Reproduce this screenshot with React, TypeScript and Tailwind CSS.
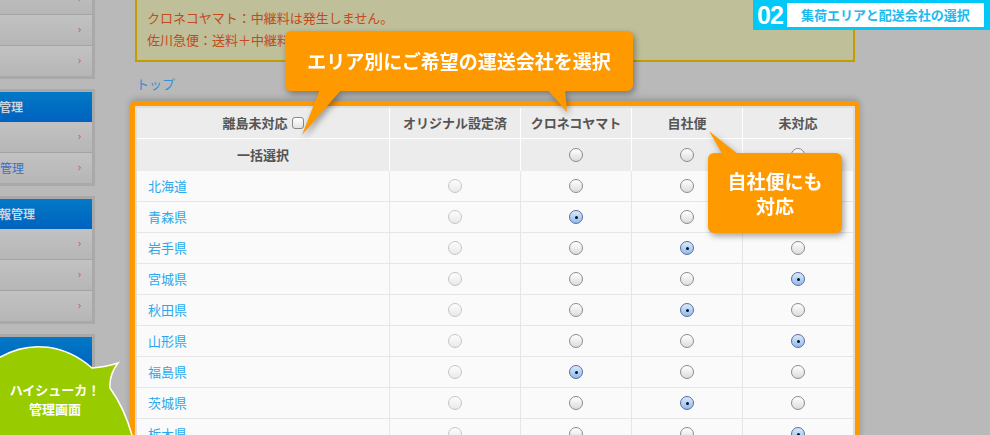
import React from 'react';

type RadioState = 'off' | 'on' | 'dis' | 'none';

const JP = { fontFamily: '"Noto Sans CJK JP", "Noto Sans", sans-serif' };

const Arrow: React.FC = () => (
    <svg width="3" height="5" viewBox="0 0 3 5" className="absolute right-[11px] top-1/2 -translate-y-1/2">
        <path d="M0.4 0.4 L2.5 2.5 L0.4 4.6" fill="none" stroke="#c8504a" strokeWidth="1" />
    </svg>
);

interface SideBoxProps {
    title?: string;
    rows: string[];
    className?: string;
}

const SideBox: React.FC<SideBoxProps> = ({ title, rows, className = '' }) => (
    <div className={`border-[3px] border-l-0 border-[#a9a9a9] ${className}`}>
        {title !== undefined && (
            <div className="h-[30px] flex items-center bg-gradient-to-b from-[#0379c6] to-[#0062bf] text-[12px] font-bold text-[#cbd3df] -indent-[1px]">
                {title}
            </div>
        )}
        {rows.map((r, i) => (
            <div
                key={i}
                className={`relative h-[30px] flex items-center bg-gradient-to-b from-[#c2c2c2] to-[#b6b6b6] text-[12px] text-[#3a6fc4] ${i > 0 ? 'border-t border-[#a3a3a3] h-[31px]' : ''}`}
            >
                {r}
                <Arrow />
            </div>
        ))}
    </div>
);

const Radio: React.FC<{ state: RadioState }> = ({ state }) => {
    if (state === 'none') return null;
    if (state === 'on') {
        return (
            <div className="w-[14px] h-[14px] rounded-full border border-[#5b6c99] bg-gradient-to-b from-[#dbe9fb] to-[#8fbcf0] flex items-center justify-center">
                <div className="w-[3px] h-[3px] rounded-full bg-[#111]" />
            </div>
        );
    }
    if (state === 'dis') {
        return <div className="w-[14px] h-[14px] rounded-full border border-[#c6c6c6] bg-gradient-to-b from-[#fdfdfd] to-[#e9e9e9]" />;
    }
    return <div className="w-[14px] h-[14px] rounded-full border border-[#8c8c8c] bg-gradient-to-b from-[#ffffff] to-[#dcdcdc]" />;
};

const widths = ['w-[253px]', 'w-[131px]', 'w-[111px]', 'w-[111px]', 'w-[110px]'];

const PREFS: [string, RadioState, RadioState, RadioState, RadioState][] = [
    ['北海道', 'dis', 'off', 'off', 'off'],
    ['青森県', 'dis', 'on', 'off', 'off'],
    ['岩手県', 'dis', 'off', 'on', 'off'],
    ['宮城県', 'dis', 'off', 'off', 'on'],
    ['秋田県', 'dis', 'off', 'on', 'off'],
    ['山形県', 'dis', 'off', 'off', 'on'],
    ['福島県', 'dis', 'on', 'off', 'off'],
    ['茨城県', 'dis', 'off', 'on', 'off'],
    ['栃木県', 'dis', 'off', 'off', 'on'],
];

const CarrierTable: React.FC = () => (
    <div className="border-[5px] border-[#ff9900] rounded-[6px] p-[2px] bg-[#dedede] shadow-[0_-2px_6px_rgba(0,0,0,0.2)]">
        <div className="w-[716px]">
            {/* header */}
            <div className="flex h-[31px] bg-[#ececec] border-b border-white text-[13px] font-bold text-[#555]">
                {['離島未対応', 'オリジナル設定済', 'クロネコヤマト', '自社便', '未対応'].map((h, i) => (
                    <div key={i} className={`${widths[i]} flex items-center justify-center ${i < 4 ? 'border-r border-white' : ''}`}>
                        {h}
                        {i === 0 && <span className="ml-[4px] w-[12px] h-[12px] rounded-[3px] border border-[#888] bg-gradient-to-b from-white to-[#e2e2e2]" />}
                    </div>
                ))}
            </div>
            <div className="flex h-[32px] bg-[#ececec] text-[13px] font-bold text-[#555]">
                {(['', 'none', 'off', 'off', 'off'] as (RadioState | '')[]).map((s, i) => (
                    <div key={i} className={`${widths[i]} flex items-center justify-center ${i < 4 ? 'border-r border-white' : ''}`}>
                        {i === 0 ? '一括選択' : <Radio state={s as RadioState} />}
                    </div>
                ))}
            </div>
            {PREFS.map(([name, ...states]) => (
                <div key={name} className="flex h-[31px] bg-[#fafafa] border-b border-[#e6e6e6]">
                    <div className={`${widths[0]} border-r border-[#e6e6e6] flex items-center pl-[11px] text-[13px] text-[#2aa9ec]`}>{name}</div>
                    {states.map((s, i) => (
                        <div key={i} className={`${widths[i + 1]} flex items-center justify-center ${i < 3 ? 'border-r border-[#e6e6e6]' : ''}`}>
                            <Radio state={s} />
                        </div>
                    ))}
                </div>
            ))}
        </div>
    </div>
);

const App: React.FC = () => {
    return (
        <div className="relative w-[990px] h-[435px] overflow-hidden bg-[#b9b9b9] flex" style={JP}>
            {/* sidebar */}
            <div className="w-[95px] shrink-0">
                <SideBox rows={['', '', '']} className="-mt-[16px] border-t-0" />
                <SideBox title="管理" rows={['', '管理']} className="mt-[10px]" />
                <SideBox title="報管理" rows={['', '', '']} className="mt-[10px]" />
                <SideBox title="" rows={['', '', '']} className="mt-[10px]" />
            </div>

            {/* main */}
            <div className="ml-[35px] w-[730px] shrink-0">
                <div className="mx-[5px] h-[62px] border-2 border-t-0 border-[#c49c00] bg-[#bfbf9a] pt-[7px] pl-[10px] text-[13px] leading-[22px] text-[#c24a20]">
                    <p>クロネコヤマト：中継料は発生しません。</p>
                    <p>佐川急便：送料＋中継料が発生します。</p>
                </div>
                <div className="mt-[14px] ml-[6px] text-[13px] leading-[16px] text-[#3a8fd0]">トップ</div>
                <div className="mt-[9px]">
                    <CarrierTable />
                </div>
            </div>

            {/* step badge */}
            <div className="absolute left-[753px] top-0 w-[237px] h-[30px] bg-[#00c8f8] flex items-center pl-[4px]">
                <span className="text-[25px] leading-none font-bold text-white tracking-[-1px]" style={{ fontFamily: '"Liberation Sans", sans-serif' }}>02</span>
                <div className="ml-[4px] w-[197px] h-[24px] bg-white flex items-center justify-center text-[13px] font-bold text-[#1db9ef]">
                    集荷エリアと配送会社の選択
                </div>
            </div>

            {/* callout: area selection */}
            <div className="absolute left-[285px] top-[31px] w-[348px] h-[60px] [filter:drop-shadow(2px_3px_3px_rgba(0,0,0,0.35))]">
                <svg className="absolute left-0 top-0 overflow-visible" width="348" height="60">
                    <polygon points="35,58 57,58 17,104" fill="#ff9900" />
                    <polygon points="262,58 280,58 282,81" fill="#ff9900" />
                </svg>
                <div className="relative h-full rounded-[6px] bg-[#ff9900] flex items-center justify-center text-[19px] font-bold text-white">
                    エリア別にご希望の運送会社を選択
                </div>
            </div>

            {/* callout: own delivery */}
            <div className="absolute left-[708px] top-[153px] w-[134px] h-[80px] [filter:drop-shadow(2px_3px_3px_rgba(0,0,0,0.35))]">
                <svg className="absolute left-0 top-0 overflow-visible" width="134" height="80">
                    <polygon points="15,2 31,2 1,-22" fill="#ff9900" />
                </svg>
                <div className="relative h-full rounded-[6px] bg-[#ff9900] flex flex-col items-center justify-center text-[19px] leading-[25px] font-bold text-white">
                    <span>自社便にも</span>
                    <span>対応</span>
                </div>
            </div>

            {/* green bubble */}
            <div className="absolute left-0 top-[330px] w-[140px] h-[105px]">
                <svg width="140" height="105" className="absolute left-0 top-0">
                    <path d="M92 38 Q106 37 118 33 Q109 45 110 58 A100 137 0 1 1 92 38 Z" fill="#99cc00" stroke="#ffffff" strokeWidth="1.5" />
                </svg>
                <div className="absolute left-0 top-[50px] w-[110px] text-center text-[13px] leading-[19px] font-bold text-white">
                    <p>ハイシューカ！</p>
                    <p>管理画面</p>
                </div>
            </div>
        </div>
    );
};

export default App;
